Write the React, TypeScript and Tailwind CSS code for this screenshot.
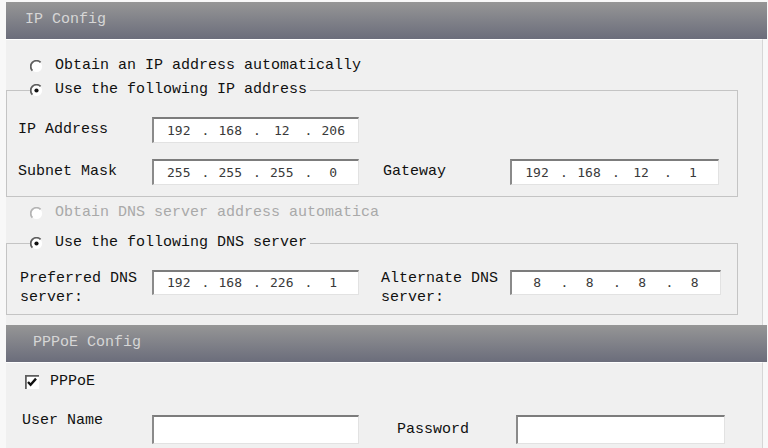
import React from "react";

const mono = "font-['Liberation_Mono','DejaVu_Sans_Mono',monospace]";

function Radio({ checked = false, disabled = false }: { checked?: boolean; disabled?: boolean }) {
  const dark = disabled ? "#b4b4b4" : "#5e5e5e";
  return (
    <svg width="13" height="13" viewBox="0 0 13 13" className="shrink-0">
      <circle cx="6.5" cy="6.5" r="5.6" fill="#ffffff" />
      <path d="M2.4 10.6 A5.7 5.7 0 0 1 10.6 2.4" fill="none" stroke={dark} strokeWidth="1.8" />
      {checked && <circle cx="6.5" cy="6.5" r="2.1" fill={disabled ? "#a0a0a0" : "#111"} />}
    </svg>
  );
}

function Checkbox({ checked = false }: { checked?: boolean }) {
  return (
    <svg width="14" height="14" viewBox="0 0 14 14" className="shrink-0">
      <rect x="0" y="0" width="14" height="14" fill="#ffffff" />
      <path d="M0.9 14 V0.9 H14" fill="none" stroke="#5e5e5e" strokeWidth="1.8" />
      {checked && <path d="M3 7 L5.6 9.8 L11 3.6" fill="none" stroke="#111" strokeWidth="2.4" />}
    </svg>
  );
}

function IpBox({ value, w = "w-[207px]", h = "h-[26px]" }: { value?: string; w?: string; h?: string }) {
  const parts = value ? value.split(".") : null;
  return (
    <div
      className={`${w} ${h} shrink-0 bg-white border-t-2 border-l-2 border-b border-r border-t-[#7c7c7c] border-l-[#8a8a8a] border-b-[#e2e2e2] border-r-[#e2e2e2]`}
    >
      {parts && (
        <div className="grid grid-cols-[1fr_6px_1fr_6px_1fr_6px_1fr] items-center h-full px-[2px] font-['DejaVu_Sans_Mono',monospace] text-[13px] text-[#3a3a3a]">
          {parts.map((p, i) => (
            <React.Fragment key={i}>
              {i > 0 && <span className="text-center">.</span>}
              <span className="text-center">{p}</span>
            </React.Fragment>
          ))}
        </div>
      )}
    </div>
  );
}

function Header({ title, pad }: { title: string; pad: string }) {
  return (
    <div
      className={`w-[761px] h-[37px] flex items-center ${pad} bg-gradient-to-b from-[#969696] to-[#6b6d7b] text-[#d6d6d6]`}
    >
      {title}
    </div>
  );
}

function Legend({ text }: { text: string }) {
  return (
    <div className="flex items-center h-[20px]">
      <div className="w-[24px] h-px bg-[#c4c4c4]" />
      <Radio checked />
      <span className="ml-[12px] mr-[3px] whitespace-nowrap">{text}</span>
      <div className="flex-1 h-px bg-[#c4c4c4]" />
    </div>
  );
}

export default function App() {
  return (
    <div className={`w-[768px] h-[448px] overflow-hidden bg-[#f8f8f8] pt-[2px] pl-[6px] text-[15px] text-[#111111] ${mono}`}>
      <Header title="IP Config" pad="pl-[19px]" />

      <div className="w-[757px] h-[286px] bg-[#f0f0f0] border-t border-t-white border-r border-r-[#d6d6d6] flex flex-col">
        <div className="flex items-center h-[20px] mt-[16px] pl-[24px]">
          <Radio />
          <span className="ml-[12px]">Obtain an IP address automatically</span>
        </div>

        <div className="w-[732px] mt-[4px]">
          <Legend text="Use the following IP address" />
          <div className="-mt-[10px] pt-[10px] h-[107px] border-x border-b border-[#c4c4c4]">
            <div className="flex items-center mt-[17px] pl-[11px]">
              <span className="w-[134px] shrink-0">IP Address</span>
              <IpBox value="192.168.12.206" />
            </div>
            <div className="flex items-center mt-[16px] pl-[11px]">
              <span className="w-[134px] shrink-0">Subnet Mask</span>
              <IpBox value="255.255.255.0" />
              <span className="w-[127px] ml-[24px] shrink-0">Gateway</span>
              <IpBox value="192.168.12.1" w="w-[209px]" />
            </div>
          </div>
        </div>

        <div className="flex items-center h-[20px] mt-[6px] pl-[24px] text-[#a9a9a9]">
          <Radio disabled />
          <span className="ml-[12px] whitespace-nowrap">Obtain DNS server address automatica</span>
        </div>

        <div className="w-[732px] mt-[10px]">
          <Legend text="Use the following DNS server" />
          <div className="-mt-[10px] pt-[10px] h-[72px] border-x border-b border-[#c4c4c4]">
            <div className="flex items-start mt-[17px] pl-[13px]">
              <span className="w-[132px] shrink-0 leading-[19px] -mt-[1px]">
                Preferred DNS
                <br />
                server:
              </span>
              <IpBox value="192.168.226.1" h="h-[25px]" />
              <span className="w-[129px] ml-[22px] shrink-0 leading-[19px] -mt-[1px]">
                Alternate DNS
                <br />
                server:
              </span>
              <IpBox value="8.8.8.8" w="w-[211px]" h="h-[25px]" />
            </div>
          </div>
        </div>
      </div>

      <Header title="PPPoE Config" pad="pl-[27px]" />

      <div className="w-[757px] h-[86px] bg-[#f0f0f0] border-t border-t-white border-r border-r-[#d6d6d6] flex flex-col">
        <div className="flex items-center h-[20px] mt-[9px] pl-[19px]">
          <Checkbox checked />
          <span className="ml-[11px]">PPPoE</span>
        </div>
        <div className="flex items-start mt-[23px] pl-[16px]">
          <span className="w-[130px] shrink-0 leading-[20px] -mt-[4px]">User Name</span>
          <IpBox h="h-[29px]" />
          <span className="w-[119px] ml-[38px] shrink-0 leading-[20px] mt-[5px]">Password</span>
          <IpBox w="w-[209px]" h="h-[29px]" />
        </div>
      </div>
    </div>
  );
}
